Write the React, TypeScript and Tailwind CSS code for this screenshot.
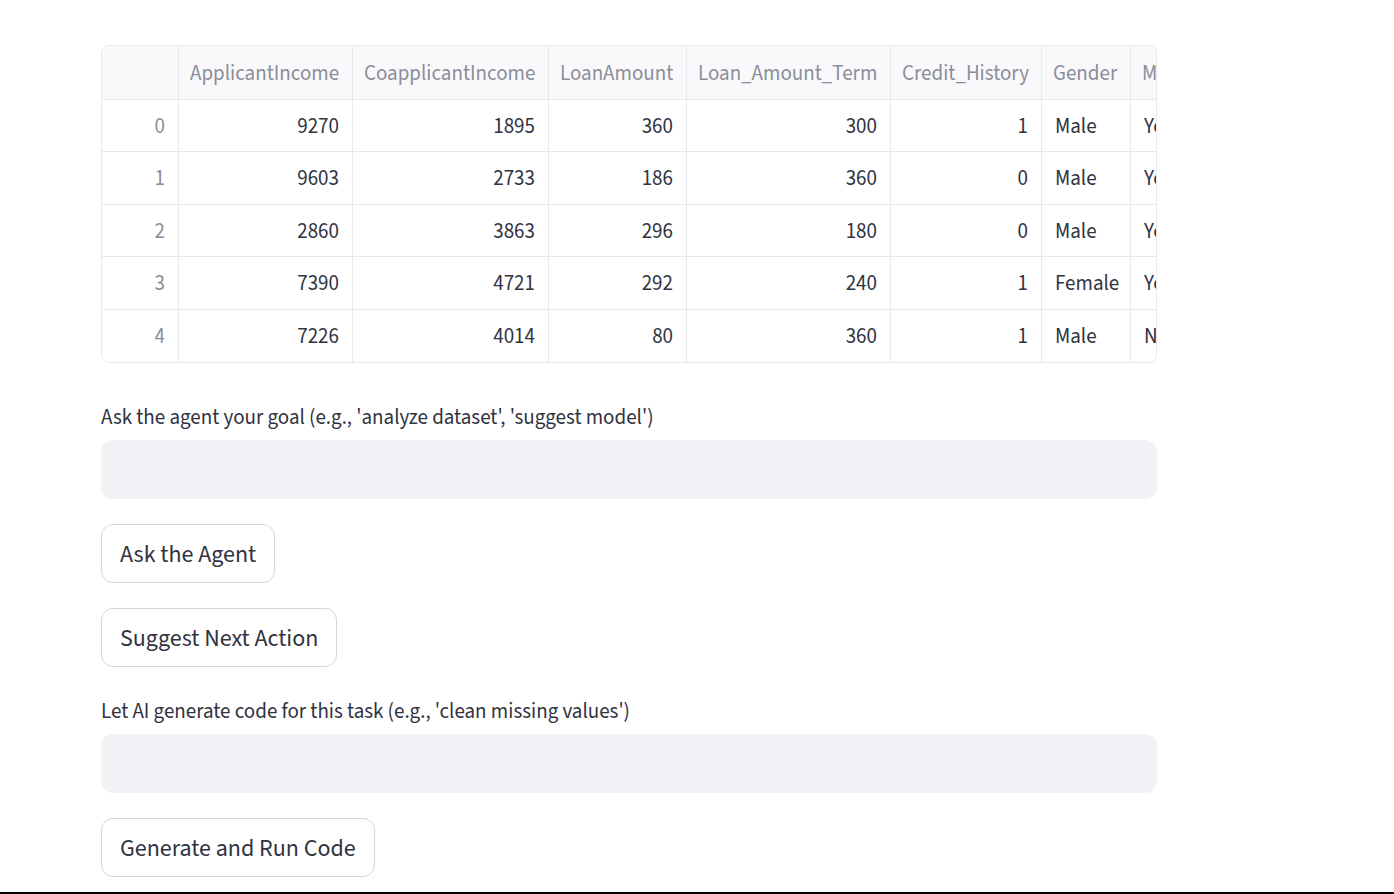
import React from 'react';

const columns = [
  { name: '', width: 'w-[77px]', align: 'right', index: true },
  { name: 'ApplicantIncome', width: 'w-[174px]', align: 'right' },
  { name: 'CoapplicantIncome', width: 'w-[196px]', align: 'right' },
  { name: 'LoanAmount', width: 'w-[138px]', align: 'right' },
  { name: 'Loan_Amount_Term', width: 'w-[204px]', align: 'right' },
  { name: 'Credit_History', width: 'w-[151px]', align: 'right' },
  { name: 'Gender', width: 'w-[89px]', align: 'left' },
  { name: 'Married', width: 'w-[110px]', align: 'left' },
];

const rows = [
  ['0', '9270', '1895', '360', '300', '1', 'Male', 'Yes'],
  ['1', '9603', '2733', '186', '360', '0', 'Male', 'Yes'],
  ['2', '2860', '3863', '296', '180', '0', 'Male', 'Yes'],
  ['3', '7390', '4721', '292', '240', '1', 'Female', 'Yes'],
  ['4', '7226', '4014', '80', '360', '1', 'Male', 'No'],
];

const font = { fontFamily: '"Source Sans Pro", "Source Sans 3", Lato, sans-serif' };

const DataTable = () => (
  <div className="w-[1056px] overflow-hidden rounded-[8px] border border-[#e8e9ec] bg-white">
    <div className="flex w-max bg-[#f9f9fb]">
      {columns.map((col, i) => (
        <div
          key={i}
          className={`${col.width} h-[54px] shrink-0 border-r border-b border-[#e8e9ec] px-[11px] pt-[2px] flex items-center justify-start text-[#8b8e99] whitespace-nowrap`}
        >
          {col.name}
        </div>
      ))}
    </div>
    {rows.map((row, r) => (
      <div key={r} className="flex w-max bg-white">
        {row.map((cell, c) => (
          <div
            key={c}
            className={`${columns[c].width} h-[52.4px] shrink-0 border-r border-[#e8e9ec] ${
              r < rows.length - 1 ? 'border-b' : ''
            } px-[13px] pt-[2px] flex items-center whitespace-nowrap ${
              columns[c].align === 'right' ? 'justify-end' : 'justify-start'
            } ${columns[c].index ? 'text-[#8b8e99]' : 'text-[#31333f]'}`}
          >
            {cell}
          </div>
        ))}
      </div>
    ))}
  </div>
);

const TextField = ({ label }: { label: string }) => (
  <div className="flex flex-col">
    <div className="h-[42px] pt-[4px] leading-[30px] text-[21px] text-[#31333f]">{label}</div>
    <input
      type="text"
      className="w-[1056px] h-[59px] rounded-[12px] bg-[#f0f2f6] px-4 text-[21px] text-[#31333f] outline-none"
    />
  </div>
);

const Button = ({ children }: { children: React.ReactNode }) => (
  <div>
    <button className="h-[59px] rounded-[12px] border border-[#d6d6d9] bg-white px-[18px] pt-[4px] text-[24px] text-[#31333f]">
      {children}
    </button>
  </div>
);

export default function App() {
  return (
    <div className="min-h-screen bg-white" style={font}>
      <div className="pl-[101px] pt-[45px] pb-[40px] flex flex-col">
        <div className="text-[21px]">
          <DataTable />
        </div>
        <div className="mt-[35px] flex flex-col gap-[25px]">
          <TextField label="Ask the agent your goal (e.g., 'analyze dataset', 'suggest model')" />
          <Button>Ask the Agent</Button>
          <Button>Suggest Next Action</Button>
          <TextField label="Let AI generate code for this task (e.g., 'clean missing values')" />
          <Button>Generate and Run Code</Button>
        </div>
      </div>
      <div className="fixed bottom-0 left-0 h-[2px] w-full bg-black" />
    </div>
  );
}
